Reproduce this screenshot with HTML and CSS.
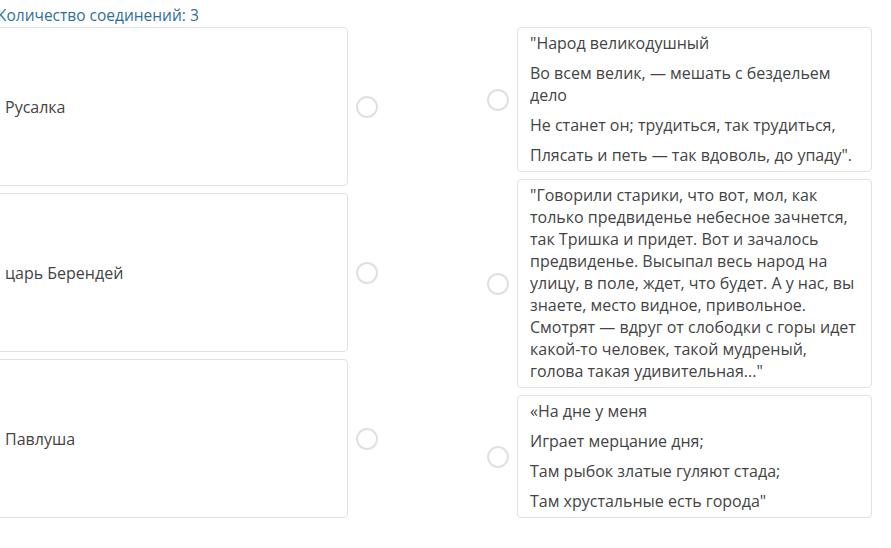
FILE: index.html
```html
<!DOCTYPE html>
<html lang="ru">
<head>
<meta charset="utf-8">
<title>Соединения</title>
<link rel="stylesheet" href="styles.css">
</head>
<body>
<div class="wrap">
  <div class="title">Количество соединений: 3</div>
  <div class="board">
    <div class="col-left">
      <div class="row-left">
        <div class="card card-left">Русалка</div>
        <span class="dot"></span>
      </div>
      <div class="row-left">
        <div class="card card-left">царь Берендей</div>
        <span class="dot"></span>
      </div>
      <div class="row-left">
        <div class="card card-left">Павлуша</div>
        <span class="dot"></span>
      </div>
    </div>
    <div class="col-right">
      <div class="row-right">
        <span class="dot"></span>
        <div class="card card-right">
          <p>"Народ великодушный</p>
          <p>Во всем велик, — мешать с бездельем дело</p>
          <p>Не станет он; трудиться, так трудиться,</p>
          <p>Плясать и петь — так вдоволь, до упаду".</p>
        </div>
      </div>
      <div class="row-right">
        <span class="dot"></span>
        <div class="card card-right">
          <p>"Говорили старики, что вот, мол, как только предвиденье небесное зачнется, так Тришка и придет. Вот и зачалось предвиденье. Высыпал весь народ на улицу, в поле, ждет, что будет. А у нас, вы знаете, место видное, привольное. Смотрят — вдруг от слободки с горы идет какой-то человек, такой мудреный, голова такая удивительная..."</p>
        </div>
      </div>
      <div class="row-right">
        <span class="dot"></span>
        <div class="card card-right">
          <p>«На дне у меня</p>
          <p>Играет мерцание дня;</p>
          <p>Там рыбок златые гуляют стада;</p>
          <p>Там хрустальные есть города"</p>
        </div>
      </div>
    </div>
  </div>
</div>
</body>
</html>
```

FILE: styles.css
```css
html, body {
  margin: 0;
  padding: 0;
  background: #ffffff;
}
body {
  font-family: "Open Sans", "Liberation Sans", sans-serif;
  font-size: 16px;
  color: #444444;
}
.wrap {
  margin-left: -8px;
  width: 880px;
}
.title {
  color: #2f6f9a;
  font-size: 15.5px;
  line-height: 20px;
  padding: 5px 0 0 5px;
  margin-bottom: 2px;
}
.board {
  display: flex;
  align-items: stretch;
}
.col-left {
  display: flex;
  flex-direction: column;
  gap: 7px;
  width: 386px;
}
.row-left {
  flex: 1;
  display: flex;
  align-items: center;
  gap: 8px;
}
.card {
  border: 1px solid #e2e2e2;
  border-radius: 4px;
  background: #fff;
  box-sizing: border-box;
}
.card-left {
  align-self: stretch;
  width: 356px;
  display: flex;
  align-items: center;
  padding: 0 12px;
}
.col-right {
  margin-left: 109px;
  display: flex;
  flex-direction: column;
  gap: 7px;
}
.row-right {
  display: flex;
  align-items: center;
  gap: 8px;
}
.card-right {
  width: 355px;
  padding: 4px 12px 5px;
  line-height: 22px;
}
.card-right p {
  margin: 0 0 8px;
}
.card-right p:last-child {
  margin-bottom: 0;
}
.dot {
  flex: none;
  width: 22px;
  height: 22px;
  box-sizing: border-box;
  border: 2px solid #e0e0e0;
  border-radius: 50%;
  background: #fff;
}
```
